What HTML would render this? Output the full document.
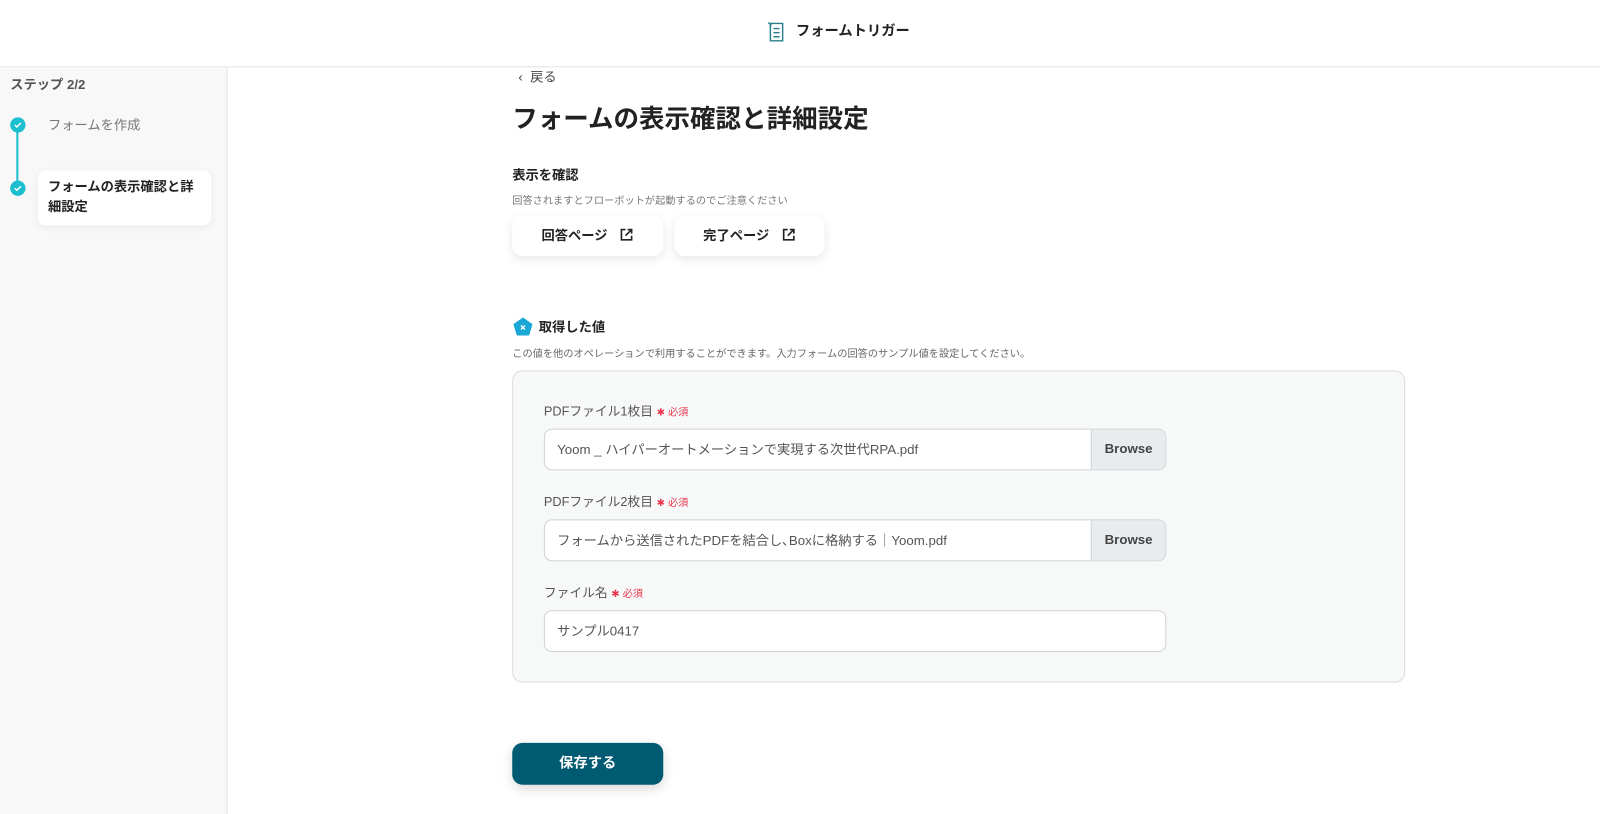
<!DOCTYPE html>
<html><head><meta charset="utf-8"><style>
*{box-sizing:border-box;margin:0;padding:0}
html,body{width:1600px;height:814px;overflow:hidden;background:#fff}
body{font-family:"Liberation Sans","Noto Sans CJK JP",sans-serif;color:#222;position:relative}
#w{position:absolute;left:0;top:0;width:1568px;height:798px;transform:scale(1.0204);transform-origin:0 0}
.hdr{position:absolute;left:0;top:0;width:1568px;height:66px;border-bottom:1px solid #e3e3e3;background:#fff}
.hdr .t{position:absolute;left:780px;top:20px;font-size:14px;font-weight:bold;color:#222}
.side{position:absolute;left:0;top:66px;width:223px;height:740px;background:#f8f8f8;border-right:1px solid #e3e3e3}
.abs{position:absolute}
.dot{position:absolute;width:15px;height:15px;border-radius:50%;background:#1bbfd0}
.dot svg{position:absolute;left:3px;top:3px}
.btn{position:absolute;height:40px;background:#fff;border-radius:10px;box-shadow:0 3px 10px rgba(0,0,0,.1);font-size:13px;font-weight:bold;display:flex;align-items:center;justify-content:center;gap:12px;padding-bottom:3px}
.panel{position:absolute;left:502px;top:363px;width:875px;height:306px;background:#f7f8f8;border:1px solid #dcdcdc;border-radius:10px}
.lbl{position:absolute;left:533px;font-size:12.5px;color:#555}
.lbl b{color:#e8384f;font-weight:normal;font-size:10px}
.inp{position:absolute;left:533px;width:610px;height:41px;background:#fff;border:1px solid #cfd3d6;border-radius:8px;font-size:13px;color:#555;padding:9px 12px;overflow:hidden}
.br{position:absolute;right:0;top:0;width:73px;height:39px;background:#e9ecef;border-left:1px solid #cfd3d6;text-align:center;line-height:37px;color:#444;font-weight:bold}
</style></head><body><div id="w">
<div class="hdr">
<svg class="abs" style="left:752px;top:20px" width="18" height="22" viewBox="0 0 18 22" fill="none" stroke="#2a7d8c" stroke-width="1.4"><path d="M3 3h12v17H3z"/><path d="M6 8h6M6 12h6M6 16h6"/><path d="M1 2l3 3" /></svg>
<div class="t">フォームトリガー</div>
</div>
<div class="side">
<div class="abs" style="left:10px;top:6px;font-size:13px;font-weight:bold;color:#555">ステップ 2/2</div>
<div class="abs" style="left:16px;top:57px;width:2px;height:63px;background:#1bbfd0"></div>
<div class="dot" style="left:10px;top:49px"><svg width="9" height="9" viewBox="0 0 9 9"><path d="M1.5 4.5l2 2 4-4" stroke="#fff" stroke-width="1.4" fill="none"/></svg></div>
<div class="abs" style="left:47px;top:46px;font-size:13px;color:#777">フォームを作成</div>
<div class="dot" style="left:10px;top:111px"><svg width="9" height="9" viewBox="0 0 9 9"><path d="M1.5 4.5l2 2 4-4" stroke="#fff" stroke-width="1.4" fill="none"/></svg></div>
<div class="abs" style="left:37px;top:101px;width:170px;height:54px;background:#fff;border-radius:8px;box-shadow:0 2px 8px rgba(0,0,0,.06);padding:6px 10px;font-size:13px;font-weight:bold;line-height:20px;color:#222">フォームの表示確認と詳細設定</div>
</div>
<div class="abs" style="left:508px;top:65px;font-size:13px;color:#444">‹&nbsp; 戻る</div>
<div class="abs" style="left:502px;top:97px;font-size:25px;font-weight:bold;color:#222">フォームの表示確認と詳細設定</div>
<div class="abs" style="left:502px;top:161px;font-size:13px;font-weight:bold">表示を確認</div>
<div class="abs" style="left:502px;top:188px;font-size:10px;color:#777">回答されますとフローボットが起動するのでご注意ください</div>
<div class="btn" style="left:502px;top:211px;width:148px">回答ページ <svg width="14" height="14" viewBox="0 0 14 14" fill="none" stroke="#222" stroke-width="1.6"><path d="M6 2H2v10h10V8M8 2h4v4M12 2L6 8"/></svg></div>
<div class="btn" style="left:661px;top:211px;width:147px">完了ページ <svg width="14" height="14" viewBox="0 0 14 14" fill="none" stroke="#222" stroke-width="1.6"><path d="M6 2H2v10h10V8M8 2h4v4M12 2L6 8"/></svg></div>
<svg class="abs" style="left:503px;top:311px" width="19" height="19" viewBox="0 0 19 19"><path d="M9.5 1L18 7l-3 10H4L1 7z" fill="#1aa7d6" stroke="#1aa7d6" stroke-linejoin="round" stroke-width="1.5"/><path d="M7.5 8l4 4M11.5 8l-4 4" stroke="#fff" stroke-width="1.3"/></svg>
<div class="abs" style="left:528px;top:310px;font-size:13px;font-weight:bold">取得した値</div>
<div class="abs" style="left:502px;top:338px;font-size:10px;color:#666">この値を他のオペレーションで利用することができます。入力フォームの回答のサンプル値を設定してください。</div>
<div class="panel"></div>
<div class="lbl" style="top:392px">PDFファイル1枚目 <b>✱ 必須</b></div>
<div class="inp" style="top:420px">Yoom _ ハイパーオートメーションで実現する次世代RPA.pdf<div class="br">Browse</div></div>
<div class="lbl" style="top:481px">PDFファイル2枚目 <b>✱ 必須</b></div>
<div class="inp" style="top:509px">フォームから送信されたPDFを結合し､Boxに格納する｜Yoom.pdf<div class="br">Browse</div></div>
<div class="lbl" style="top:570px">ファイル名 <b>✱ 必須</b></div>
<div class="inp" style="top:598px">サンプル0417</div>
<div class="abs" style="left:502px;top:728px;width:148px;height:41px;background:#005a72;border-radius:10px;color:#fff;font-size:14px;font-weight:bold;text-align:center;line-height:39px;box-shadow:0 4px 12px rgba(0,0,0,.15)">保存する</div>
</div></body></html>
